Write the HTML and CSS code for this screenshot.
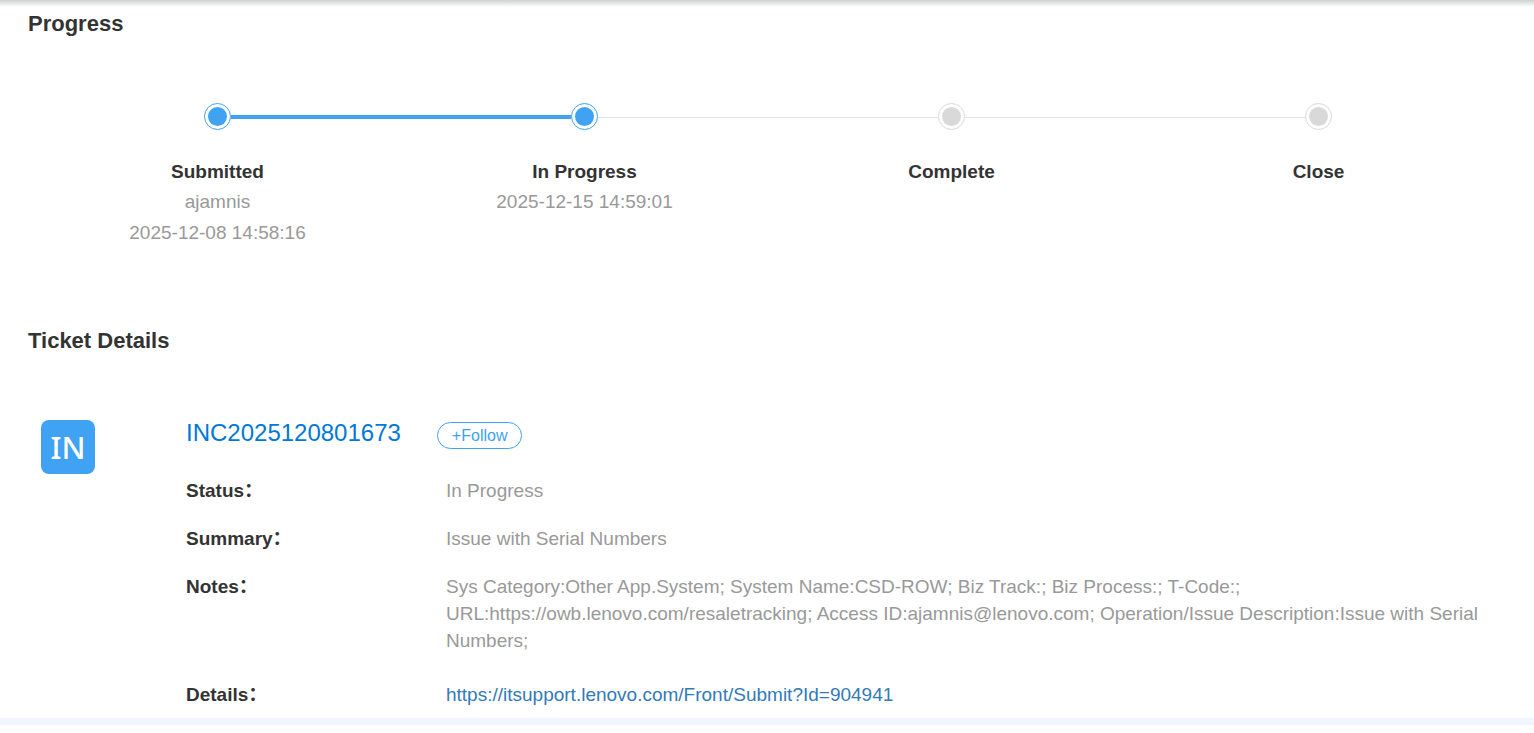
FILE: index.html
```
<!DOCTYPE html>
<html lang="en">
<head>
<meta charset="utf-8">
<title>Ticket Details</title>
<link rel="stylesheet" href="styles.css">
</head>
<body>
<main class="page">
	<section class="progress">
		<h2>Progress</h2>
		<ol class="steps">
			<li class="step done">
				<div class="track"><span class="line start"></span><span class="dot"></span><span class="line active"></span></div>
				<h3>Submitted</h3>
				<p>ajamnis</p>
				<p>2025-12-08 14:58:16</p>
			</li>
			<li class="step done">
				<div class="track"><span class="line active"></span><span class="dot"></span><span class="line"></span></div>
				<h3>In Progress</h3>
				<p>2025-12-15 14:59:01</p>
			</li>
			<li class="step">
				<div class="track"><span class="line"></span><span class="dot"></span><span class="line"></span></div>
				<h3>Complete</h3>
			</li>
			<li class="step">
				<div class="track"><span class="line"></span><span class="dot"></span><span class="line end"></span></div>
				<h3>Close</h3>
			</li>
		</ol>
	</section>

	<section class="details">
		<h2>Ticket Details</h2>
		<div class="ticket">
			<div class="badge">IN</div>
			<div class="info">
				<div class="head">
					<span class="number">INC2025120801673</span>
					<button type="button" class="follow">+Follow</button>
				</div>
				<dl>
					<dt>Status：</dt>
					<dd>In Progress</dd>
					<dt>Summary：</dt>
					<dd>Issue with Serial Numbers</dd>
					<dt>Notes：</dt>
					<dd class="notes">Sys Category:Other App.System; System Name:CSD-ROW; Biz Track:; Biz Process:; T-Code:; URL:https://owb.lenovo.com/resaletracking; Access ID:ajamnis@lenovo.com; Operation/Issue Description:Issue with Serial Numbers;</dd>
					<dt>Details：</dt>
					<dd><a href="https://itsupport.lenovo.com/Front/Submit?Id=904941">https://itsupport.lenovo.com/Front/Submit?Id=904941</a></dd>
				</dl>
			</div>
		</div>
	</section>
</main>
</body>
</html>
```

FILE: styles.css
```
* {
	box-sizing: border-box;
}

body {
	margin: 0;
	background: #fff;
	color: #333;
	font-family: "Liberation Sans", Arial, "Noto Sans CJK SC", sans-serif;
	font-size: 19px;
	line-height: 27px;
}

h2, h3, p, ol, dl, dd {
	margin: 0;
	padding: 0;
}

h2 {
	padding-left: 28px;
	font-size: 22px;
	line-height: 28px;
}

.page {
	padding-top: 10px;
	background: linear-gradient(#cfd1d1, #fff) no-repeat 0 0 / 100% 7px;
	border-bottom: 7px solid #f1f5fd;
}

/* progress */
.steps {
	display: flex;
	margin: 65px 32px 0 34px;
	min-height: 224px;
	list-style: none;
}

.step {
	flex: 1;
	text-align: center;
}

.track {
	display: flex;
	align-items: center;
	margin-bottom: 28px;
}

.line {
	flex: 1;
	height: 1px;
	margin-top: 1px;
	background: #e2e2e2;
}

.line.active {
	height: 4px;
	margin-top: 0;
	background: #40a2f3;
}

.line.start,
.line.end {
	background: none;
}

.dot {
	width: 27px;
	height: 27px;
	padding: 3px;
	border: 1px solid #d9d9d9;
	border-radius: 50%;
}

.dot::before {
	content: "";
	display: block;
	height: 19px;
	border-radius: 50%;
	background: #d9d9d9;
}

.done .dot {
	border-color: #40a2f3;
}

.done .dot::before {
	background: #40a2f3;
}

.step h3 {
	font-size: 19px;
	line-height: 28px;
}

.step p {
	color: #999;
	line-height: 31px;
}

/* ticket */
.ticket {
	display: flex;
	align-items: flex-start;
	padding: 65px 41px 10px;
}

.badge {
	flex: none;
	width: 54px;
	height: 54px;
	margin-right: 91px;
	border-radius: 8px;
	background: #40a2f3;
	color: #fff;
	font-family: "Noto Sans", sans-serif;
	font-size: 31px;
	font-weight: 500;
	line-height: 54px;
	text-align: center;
}

.info {
	flex: 1;
}

.head {
	display: flex;
	align-items: flex-end;
	gap: 36px;
	height: 29px;
	margin-bottom: 28px;
}

.number {
	color: #0078d7;
	font-size: 24px;
	line-height: 32px;
}

.follow {
	height: 27px;
	padding: 0 14px;
	border: 1px solid #40a2f3;
	border-radius: 14px;
	background: #fff;
	color: #40a2f3;
	font-family: inherit;
	font-size: 16px;
}

dl {
	display: grid;
	grid-template-columns: 260px 1fr;
	row-gap: 21px;
}

dt {
	font-weight: bold;
}

dd {
	color: #999;
}

.notes {
	padding-bottom: 6px;
}

a {
	color: #337ab7;
	text-decoration: none;
}
```
